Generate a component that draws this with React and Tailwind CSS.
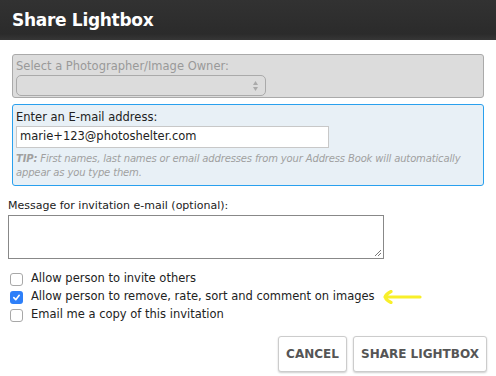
import React from 'react';

const Box = ({ checked }) =>
  checked ? (
    <span className="w-[13px] h-[13px] rounded-[3px] bg-[#2d7ff9] flex items-center justify-center shrink-0">
      <svg width="9" height="9" viewBox="0 0 10 10">
        <path d="M2 5.2 L4.2 7.4 L8 2.6" stroke="white" strokeWidth="1.8" fill="none" strokeLinecap="round" strokeLinejoin="round" />
      </svg>
    </span>
  ) : (
    <span className="block w-[13px] h-[13px] rounded-[3px] border border-[#a8a8a8] bg-white shrink-0" />
  );

const Check = ({ checked, children, extra }) => (
  <div className="flex items-center h-[18px]">
    <span className="flex ml-[10px] mr-[8px]"><Box checked={checked} /></span>
    <span>{children}</span>
    {extra}
  </div>
);

export default function App() {
  return (
    <div className="w-[496px] h-[376px] bg-white text-[11.5px] text-[#222] font-['DejaVu_Sans',Verdana,sans-serif] overflow-hidden">
      <div className="h-[40px] bg-[#2f2f2f] bg-[linear-gradient(to_bottom,#323232_0%,#2b2b2b_85%,#363636_100%)] px-[12px] flex items-center">
        <span className="text-white font-bold text-[17px] tracking-[-0.3px] pt-[1px]">Share Lightbox</span>
      </div>

      <div className="mx-[12px] mt-[14px] h-[44px] bg-[#dcdcdc] border border-[#aaa] rounded-[3px] px-[3px] pt-[3px]">
        <div className="text-[#999] leading-[16px]">Select a Photographer/Image Owner:</div>
        <div className="mt-[1px] w-[250px] h-[21px] border border-[#aaa] rounded-[5px] flex items-center justify-end pr-[6px]">
          <svg width="7" height="12" viewBox="0 0 7 12">
            <path d="M3.5 1 L6 5 L1 5 Z" fill="#aaa" />
            <path d="M3.5 11 L6 7 L1 7 Z" fill="#aaa" />
          </svg>
        </div>
      </div>

      <div className="mx-[12px] mt-[6px] h-[82px] bg-[#e8f0f6] border border-[#29a0ee] rounded-[3px] px-[3px] pt-[4px]">
        <div className="leading-[16px]">Enter an E-mail address:</div>
        <div className="mt-[1px] w-[313px] h-[22px] bg-white border border-[#c8c8c8] flex items-center px-[3px]">marie+123@photoshelter.com</div>
        <div className="mt-[4px] text-[10px] italic text-[#a0a0a0] leading-[14px] tracking-[-0.15px]">
          <span className="font-bold">TIP:</span> First names, last names or email addresses from your Address Book will automatically appear as you type them.
        </div>
      </div>

      <div className="mx-[8px] mt-[12px] leading-[16px] text-[11px]">Message for invitation e-mail (optional):</div>
      <div className="mx-[8px] mt-[1px] w-[376px] h-[44px] border border-[#888] relative">
        <svg className="absolute right-[1px] bottom-[1px]" width="8" height="8" viewBox="0 0 8 8">
          <path d="M7 1 L1 7 M7 4 L4 7" stroke="#777" strokeWidth="1" />
        </svg>
      </div>

      <div className="mt-[11px]">
        <Check>Allow person to invite others</Check>
        <Check
          checked
          extra={
            <svg className="ml-[7px]" width="40" height="14" viewBox="0 0 40 14">
              <path d="M38 7 L3 7 M9 1.5 Q4 4 3 7 Q4 10 9 12.5" stroke="#f8ef2a" strokeWidth="3.2" fill="none" strokeLinecap="round" strokeLinejoin="round" />
            </svg>
          }
        >
          Allow person to remove, rate, sort and comment on images
        </Check>
        <Check>Email me a copy of this invitation</Check>
      </div>

      <div className="flex justify-end gap-[6px] mr-[9px] mt-[12px]">
        <button className="h-[36px] w-[69px] bg-white border border-[#ccc] rounded-[3px] shadow-[0_1px_2px_rgba(0,0,0,0.2)] text-[#555] font-bold text-[12px]">CANCEL</button>
        <button className="h-[36px] w-[134px] bg-white border border-[#ccc] rounded-[3px] shadow-[0_1px_2px_rgba(0,0,0,0.2)] text-[#555] font-bold text-[12px]">SHARE LIGHTBOX</button>
      </div>
    </div>
  );
}
